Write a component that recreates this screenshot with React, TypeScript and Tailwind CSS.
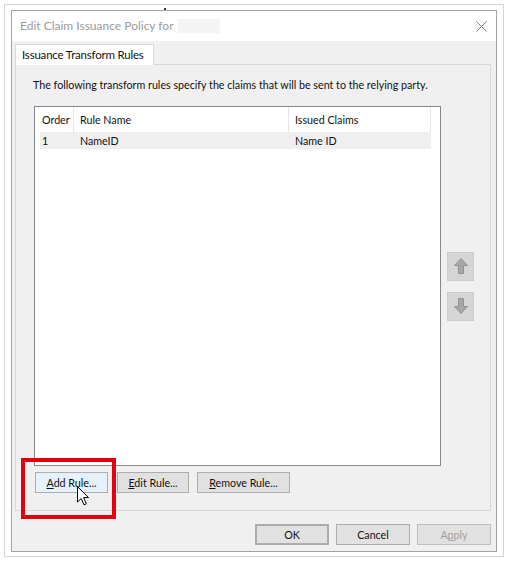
import React from "react";

function ArrowIcon({ down = false }: { down?: boolean }) {
  return (
    <svg width="16" height="18" viewBox="0 0 16 18" className={down ? "rotate-180" : ""}>
      <path d="M8 1.5 L14.5 8.5 L10.5 8.5 L10.5 16.5 L5.5 16.5 L5.5 8.5 L1.5 8.5 Z" fill="#a6a6a6" stroke="#939393" strokeWidth="1" />
    </svg>
  );
}

function Btn({ children, className = "" }: { children: React.ReactNode; className?: string }) {
  return (
    <div className={`h-[21px] flex items-center justify-center border border-[#adadad] bg-[#e1e1e1] whitespace-nowrap ${className}`}>
      {children}
    </div>
  );
}

export default function App() {
  return (
    <div className="relative w-[508px] h-[563px] bg-white font-['Lato',sans-serif] text-[10.7px] leading-[16px] text-[#111] whitespace-nowrap">
      {/* outer shadow frame */}
      <div className="ml-[4px] mt-[4px] w-[500px] h-[553px] border border-[#d4d4d4] pt-[5px] px-[6px] pb-[4px]">
        <div className="flex flex-col h-full border border-[#a3a3a3] bg-[#f0f0f0]">
          {/* Title bar */}
          <div className="h-[30px] shrink-0 bg-white flex items-center pl-[8px] pr-[9px]">
            <span className="text-[#9a9a9a] text-[12px]">Edit Claim Issuance Policy for</span>
            <span className="ml-[4px] w-[42px] h-[14px] bg-[#f4f4f4]" />
            <svg className="ml-auto" width="11" height="11" viewBox="0 0 11 11">
              <path d="M0.5 0.5 L10.5 10.5 M10.5 0.5 L0.5 10.5" stroke="#7a7a7a" strokeWidth="1" />
            </svg>
          </div>

          {/* Body */}
          <div className="flex-1 flex flex-col pt-[3px] pl-[3px] pr-[5px]">
            <div className="relative z-10 -mb-px w-[139px] h-[21px] border border-b-0 border-[#d9d9d9] bg-white flex items-center pl-[6px] text-[11.5px] tracking-[-0.2px]">
              Issuance Transform Rules
            </div>
            <div className="h-[447px] border border-[#d9d9d9] flex flex-col pl-[18px] pt-[12px]">
              <div className="-ml-px">The following transform rules specify the claims that will be sent to the relying party.</div>

              <div className="mt-[13px] flex items-center">
                {/* List view */}
                <div className="w-[407px] h-[360px] border border-[#828790] bg-white">
                  <div className="h-[25px] flex items-center">
                    <div className="w-[39px] h-full flex items-center pl-[7px] border-r border-[#e5e5e5]">Order</div>
                    <div className="w-[215px] h-full flex items-center pl-[6px] border-r border-[#e5e5e5]">Rule Name</div>
                    <div className="w-[142px] h-full flex items-center pl-[6px] border-r border-[#e5e5e5]">Issued Claims</div>
                  </div>
                  <div className="ml-[5px] w-[391px] h-[17px] flex items-center bg-[#efefef]">
                    <div className="w-[34px] pl-[2px]">1</div>
                    <div className="w-[215px] pl-[6px]">NameID</div>
                    <div className="w-[142px] pl-[6px]">Name ID</div>
                  </div>
                </div>

                {/* Move up / down */}
                <div className="ml-[6px] flex flex-col gap-[11px]">
                  <div className="w-[27px] h-[29px] bg-[#d5d5d5] border border-[#cccccc] flex items-center justify-center">
                    <ArrowIcon />
                  </div>
                  <div className="w-[27px] h-[29px] bg-[#d5d5d5] border border-[#cccccc] flex items-center justify-center">
                    <ArrowIcon down />
                  </div>
                </div>
              </div>

              <div className="mt-[6px] ml-[1px] flex">
                <Btn className="w-[73px] border-[#0078d7] bg-[#e5f1fb]">
                  <span><u>A</u>dd Rule...</span>
                </Btn>
                <Btn className="ml-[9px] w-[72px]">
                  <span><u>E</u>dit Rule...</span>
                </Btn>
                <Btn className="ml-[8px] w-[93px]">
                  <span><u>R</u>emove Rule...</span>
                </Btn>
              </div>
            </div>

            {/* Dialog buttons */}
            <div className="mt-[13px] flex justify-end gap-[7px]">
              <Btn className="w-[74px] border-[#0078d7] border-2">OK</Btn>
              <Btn className="w-[74px]">Cancel</Btn>
              <Btn className="w-[74px] bg-[#cccccc] border-[#bfbfbf] text-[#a0a0a0]">
                <span>A<u>p</u>ply</span>
              </Btn>
            </div>
          </div>
        </div>
      </div>

      {/* annotation: red highlight box */}
      <div className="absolute left-[21px] top-[454px] w-[95px] h-[61px] border-[4px] border-[#e3000f]" />

      {/* mouse cursor */}
      <svg className="absolute left-[77px] top-[482px]" width="13" height="20" viewBox="0 0 13 20">
        <path d="M0.5 0.5 L0.5 16 L4.2 12.5 L7 18.8 L9.3 17.8 L6.6 11.6 L11.5 11.6 Z" fill="white" stroke="black" strokeWidth="1" strokeLinejoin="round" />
      </svg>

      {/* small mark at top */}
      <div className="absolute left-[164px] top-[4px] w-[2px] h-[2px] bg-[#333]" />
    </div>
  );
}
